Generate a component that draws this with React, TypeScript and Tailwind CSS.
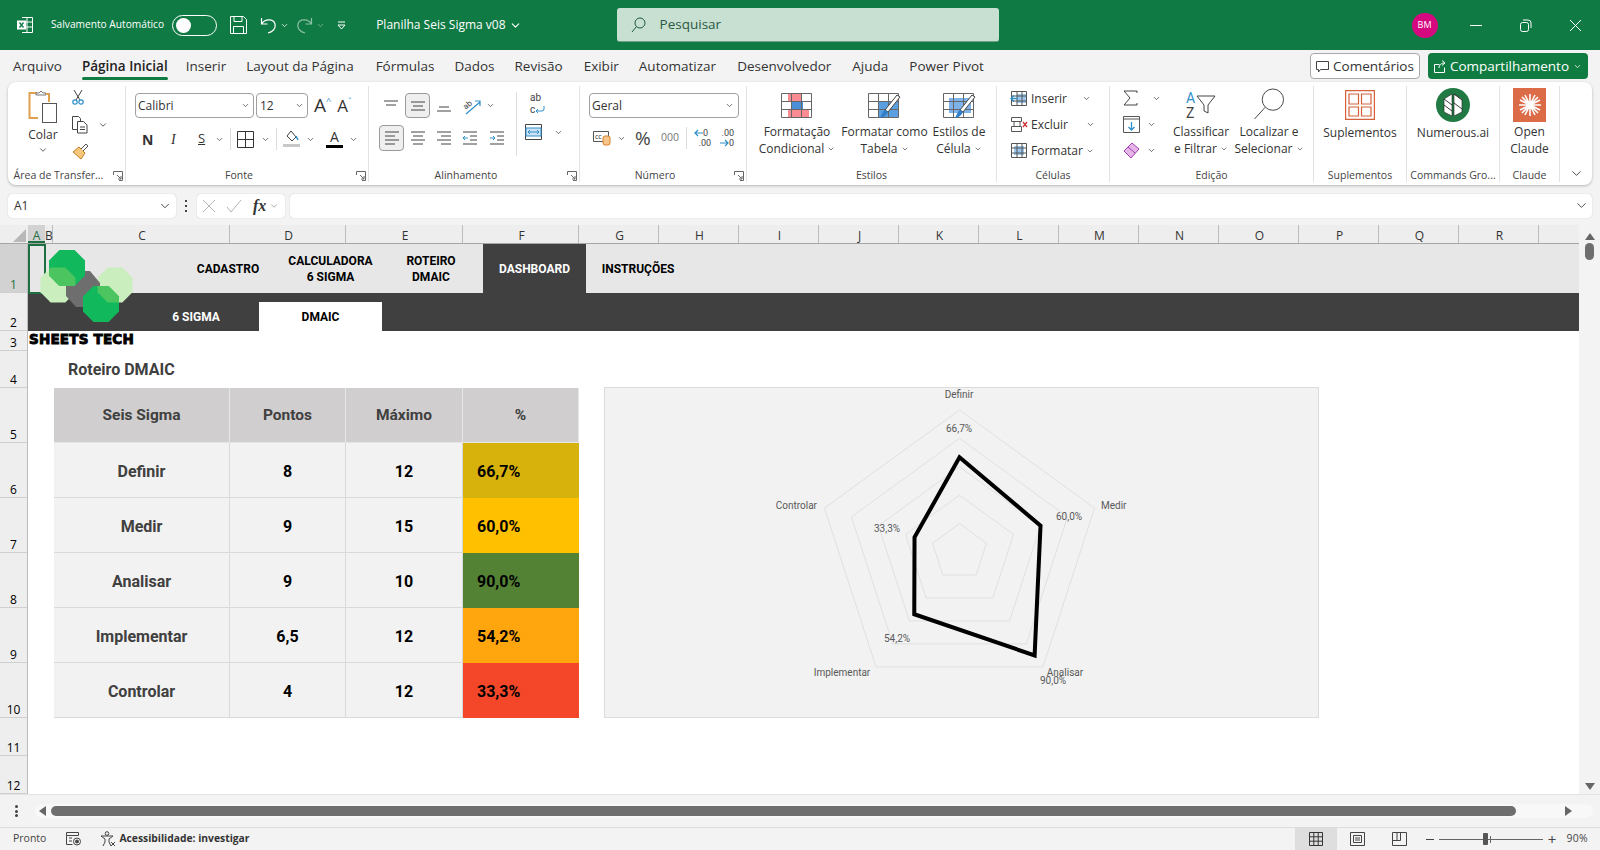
import { ChevronDown } from 'lucide-react'
import type { ReactNode } from 'react'

const ui = "font-['Open_Sans',sans-serif]"
const cal = "font-['Roboto',sans-serif]"

function Chev({ className = '', size = 10, tone = 'text-[#444]' }: { className?: string; size?: number; tone?: string }) {
  return <ChevronDown size={size} strokeWidth={2} className={`shrink-0 ${tone} ${className}`} />
}

function Launcher() {
  return (
    <svg width="10" height="10" viewBox="0 0 10 10" fill="none" stroke="#666" className="absolute top-[2px] right-[2px]">
      <path d="M.5 4V.5h9v9H6M4 4l4 4M8 5v3H5" />
    </svg>
  )
}

/* ribbon group: fixed width column with its caption underneath */
function Group({ w, label, launcher, children, last }: { w: string; label: string; launcher?: boolean; children: ReactNode; last?: boolean }) {
  return (
    <div className={`${w} relative flex shrink-0 flex-col`}>
      <div className={`h-[83px] ${last ? '' : 'border-r border-[#e3e3e3]'}`}>{children}</div>
      <div className={`relative h-[13px] text-center text-[10.5px] leading-[13px] text-[#444] ${launcher ? 'pr-[16px]' : ''} ${last ? '' : 'border-r border-[#e3e3e3]'}`}>
        {label}
        {launcher && <Launcher />}
      </div>
    </div>
  )
}

function Lines({ variant }: { variant: 'top' | 'mid' | 'bot' | 'left' | 'center' | 'right' }) {
  const p = {
    top: 'M1 3h14M3 7h10',
    mid: 'M1 4h14M3 8h10M1 12h14',
    bot: 'M3 9h10M1 13h14',
    left: 'M1 2h14M1 6h10M1 10h14M1 14h10',
    center: 'M1 2h14M3 6h10M1 10h14M3 14h10',
    right: 'M1 2h14M5 6h10M1 10h14M5 14h10',
  }[variant]
  return (
    <svg width="16" height="16" viewBox="0 0 16 16" fill="none" stroke="#444" strokeWidth="1.2">
      <path d={p} />
    </svg>
  )
}

function PasteIcon() {
  return (
    <svg width="30" height="34" viewBox="0 0 30 34" fill="none">
      <path d="M9 3H1.5v25H10" stroke="#e0a050" strokeWidth="2" />
      <path d="M8 5V3h3l2-2 2 2h3v2z" fill="#fff" stroke="#777" />
      <path d="M18 4h3v8" stroke="#e0a050" strokeWidth="2" />
      <rect x="14.5" y="13.5" width="14" height="19" fill="#fff" stroke="#555" />
    </svg>
  )
}

function Scissors() {
  return (
    <svg width="12" height="16" viewBox="0 0 12 16" fill="none">
      <path d="M2 1l6 10M10 1L4 11" stroke="#444" />
      <circle cx="3" cy="13" r="2.2" stroke="#2f8fc9" strokeWidth="1.2" />
      <circle cx="9" cy="13" r="2.2" stroke="#2f8fc9" strokeWidth="1.2" />
    </svg>
  )
}

function CopyIcon() {
  return (
    <svg width="16" height="18" viewBox="0 0 16 18" fill="none" stroke="#444">
      <path d="M5 13.5H.5V.5h6l2 2v3" />
      <path d="M5.5 5.5h6l3.5 3.5v8H5.5zM8 11h5M8 13.5h5" />
    </svg>
  )
}

function BrushIcon() {
  return (
    <svg width="17" height="17" viewBox="0 0 17 17" fill="none">
      <path d="M1 9l6-5 6 6-4 6z" fill="#f4c77b" stroke="#c77b20" />
      <path d="M9 6l5-5 2 2-5 5" fill="#fff" stroke="#555" />
    </svg>
  )
}

function FmtGrid({ kind }: { kind: 'cf' | 'table' | 'cell' }) {
  const grid = 'M.5 .5h30v24H.5zM.5 8.500h30M.5 16.500h30M10.500 .5v24M20.500 .5v24'
  return (
    <svg width="33" height="26" viewBox="0 0 33 26" fill="none">
      {kind === 'cf' && (
        <>
          <path d="M7 1h14v7H7zM7 17h21v7H7z" fill="#f98c92" />
          <path d="M10 9h12v7H10z" fill="#4a90d9" />
        </>
      )}
      {kind === 'table' && <path d="M11 8h19v16H11z" fill="#5a9fe0" />}
      {kind === 'cell' && <path d="M6 5h22v15H6z" fill="#7db3ea" />}
      <path d={grid} stroke="#666" />
      {kind !== 'cf' && <path d="M32 4L20 19l-3-2L29 2z" fill="#fff" stroke="#444" />}
      {kind !== 'cf' && <path d="M11 25c3-1 3-7 6-8l3 2c-1 3-5 6-9 6z" fill="#2f7fc9" />}
    </svg>
  )
}

function CellIcon({ kind }: { kind: 'ins' | 'del' | 'fmt' }) {
  return (
    <svg width="18" height="17" viewBox="0 0 18 17" fill="none">
      {kind === 'ins' && <path d="M7 4h10v9H7z" fill="#9cc7ee" />}
      {kind === 'fmt' && <path d="M4 4h10v9H4z" fill="#9cc7ee" />}
      <path d={kind === 'del' ? 'M1.500 1.500h10v4h-10zM4 5.500h6v5H4zM1.500 10.500h10v5h-10z' : 'M1.500 1.500h15v14h-15zM1.500 6h15M1.500 11h15M7 1.500v14M12 1.500v14'} stroke="#555" />
      {kind === 'ins' && <path d="M8 8.500H1M4 5.500l-3 3 3 3" stroke="#2f8fc9" strokeWidth="1.3" />}
      {kind === 'del' && <path d="M13 6l4 5M17 6l-4 5" stroke="#d13438" strokeWidth="1.3" />}
    </svg>
  )
}

function DecArrow({ dir }: { dir: 'left' | 'right' }) {
  return (
    <svg width="9" height="8" viewBox="0 0 9 8" fill="none" stroke="#2f8fc9" strokeWidth="1.2" className="shrink-0">
      <path d={dir === 'left' ? 'M9 4H1M4 1L1 4l3 3' : 'M0 4h8M5 1l3 3-3 3'} />
    </svg>
  )
}

function BigLabel({ lines, chev, width }: { lines: string[]; chev?: boolean; width?: string }) {
  return (
    <div className={`${width ?? ''} text-center text-[12px] leading-[17px] whitespace-nowrap text-[#333]`}>
      {lines.map((l, i) => (
        <div key={l} className="flex items-center justify-center gap-[3px]">
          {l}
          {chev && i === lines.length - 1 && <Chev size={8} />}
        </div>
      ))}
    </div>
  )
}

function TitleBar() {
  return (
    <div className="flex h-[50px] shrink-0 items-center bg-[#107a44] text-white">
      <svg width="18" height="18" viewBox="0 0 18 18" fill="none" className="ml-[16px]">
        <path d="M6 1.500h10.500v15H6M6 6h10.500M6 11h10.500M11 1.500v15" stroke="#fff" />
        <rect x="1" y="4.500" width="9" height="9" fill="#fff" />
        <path d="M3.500 6.500l4 5M7.500 6.500l-4 5" stroke="#107a44" strokeWidth="1.3" />
      </svg>
      <span className="ml-[17px] text-[10.2px] whitespace-nowrap">Salvamento Automático</span>
      <div className="ml-[8px] flex h-[21px] w-[45px] items-center rounded-full border border-white pl-[3px]">
        <div className="h-[15px] w-[15px] rounded-full bg-white" />
      </div>
      <svg width="17" height="18" viewBox="0 0 17 18" fill="none" stroke="#fff" className="ml-[13px]">
        <path d="M.5.5h13l3 3v14H.5zM4 .5v5h8v-5M3.500 17.500v-7h10v7" />
      </svg>
      <svg width="17" height="17" viewBox="0 0 17 17" fill="none" stroke="#fff" strokeWidth="1.2" className="ml-[13px]">
        <path d="M1.500 1v6h6M1.500 7c3-5 12-6 13.500 0 1 5-3 8-7 9" />
      </svg>
      <Chev size={9} className="ml-[3px]" tone="text-white" />
      <svg width="17" height="17" viewBox="0 0 17 17" fill="none" stroke="#8cbfa5" strokeWidth="1.2" className="ml-[7px]">
        <path d="M15.500 1v6h-6M15.500 7c-3-5-12-6-13.500 0-1 5 3 8 7 9" />
      </svg>
      <Chev size={9} className="ml-[3px]" tone="text-[#8cbfa5]" />
      <svg width="9" height="9" viewBox="0 0 9 9" className="ml-[12px]" fill="none" stroke="#fff">
        <path d="M1 1h7M1 4h7L4.500 8z" />
      </svg>
      <span className="ml-[30px] text-[12px] whitespace-nowrap">Planilha Seis Sigma v08</span>
      <Chev size={13} className="ml-[3px]" tone="text-white" />
      <div className="ml-[95px] flex h-[34px] w-[382px] items-center rounded-[3px] border-b border-[#6f9f86] bg-[#c8e0d2] pl-[14px] text-[#2a5a42]">
        <svg width="15" height="16" viewBox="0 0 15 16" fill="none" stroke="#1f5a3c">
          <circle cx="9" cy="6" r="5" />
          <path d="M5.500 9.500L1 15" />
        </svg>
        <span className="ml-[14px] text-[13.5px]">Pesquisar</span>
      </div>
      <div className="ml-[413px] flex h-[25px] w-[26px] items-center justify-center rounded-full bg-[#d6087f] text-[9px]">BM</div>
      <div className="ml-[32px] h-px w-[12px] bg-white" />
      <svg width="13" height="13" viewBox="0 0 13 13" fill="none" stroke="#fff" className="ml-[37px]">
        <rect x="1.500" y="3.500" width="8" height="9" rx="2" />
        <path d="M4 1h5a3 3 0 013 3v5" />
      </svg>
      <svg width="13" height="13" viewBox="0 0 13 13" fill="none" stroke="#fff" className="ml-[37px]">
        <path d="M1 1l11 11M12 1L1 12" />
      </svg>
    </div>
  )
}

function Tabs() {
  const tabs: [string, string][] = [
    ['Inserir', 'ml-[18px]'],
    ['Layout da Página', 'ml-[20px]'],
    ['Fórmulas', 'ml-[22px]'],
    ['Dados', 'ml-[20px]'],
    ['Revisão', 'ml-[20px]'],
    ['Exibir', 'ml-[21px]'],
    ['Automatizar', 'ml-[20px]'],
    ['Desenvolvedor', 'ml-[21px]'],
    ['Ajuda', 'ml-[21px]'],
    ['Power Pivot', 'ml-[21px]'],
  ]
  return (
    <div className="flex h-[32px] shrink-0 items-center bg-[#f3f3f3] text-[13.5px] whitespace-nowrap text-[#333]">
      <span className="ml-[13px]">Arquivo</span>
      <span className="relative ml-[20px] font-semibold text-[#222]">
        Página Inicial
        <span className="absolute -bottom-[4px] left-0 h-[3px] w-full rounded-sm bg-[#107c41]" />
      </span>
      {tabs.map(([t, c]) => (
        <span key={t} className={c}>
          {t}
        </span>
      ))}
      <div className="ml-auto flex h-[26px] w-[110px] items-center justify-center gap-[4px] rounded-[4px] border border-[#a8a8a8] bg-white">
        <svg width="13" height="13" viewBox="0 0 13 13" fill="none" stroke="#444">
          <path d="M.5 1.500h12v8h-8l-2 2.500v-2.500h-2z" />
        </svg>
        Comentários
      </div>
      <div className="mr-[12px] ml-[8px] flex h-[26px] w-[160px] items-center justify-center gap-[4px] rounded-[4px] bg-[#107c41] text-white">
        <svg width="12" height="13" viewBox="0 0 12 13" fill="none" stroke="#fff">
          <path d="M.5 4.500h5M.5 4.500v8h10v-5M5 8c0-3 2-5 6-5M8 .5l3 2.500-3 2.500" />
        </svg>
        Compartilhamento
        <Chev size={9} tone="text-white" />
      </div>
    </div>
  )
}

function Ribbon() {
  return (
    <div className="mx-[8px] flex h-[103px] shrink-0 rounded-[8px] bg-white pt-[4px] shadow-[0_1px_3px_rgba(0,0,0,0.25)]">
      <Group w="w-[118px]" label="Área de Transfer..." launcher>
        <div className="flex">
          <div className="ml-[20px] flex w-[30px] flex-col items-center pt-[4px]">
            <PasteIcon />
            <span className="mt-[3px] text-[12px] leading-[16px] text-[#333]">Colar</span>
            <Chev size={10} className="mt-[2px]" />
          </div>
          <div className="ml-[14px] flex flex-col items-start pt-[3px]">
            <Scissors />
            <div className="mt-[11px] flex items-center gap-[10px]">
              <CopyIcon />
              <Chev size={10} />
            </div>
            <div className="mt-[9px]">
              <BrushIcon />
            </div>
          </div>
        </div>
      </Group>

      <Group w="w-[243px]" label="Fonte" launcher>
        <div className="ml-[9px] flex items-center pt-[7px]">
          <div className="flex h-[25px] w-[119px] items-center justify-between rounded-[4px] border border-[#a0a0a0] pr-[3px] pl-[2px] text-[12px] text-[#333]">
            Calibri
            <Chev size={9} />
          </div>
          <div className="ml-[2px] flex h-[25px] w-[52px] items-center justify-between rounded-[4px] border border-[#a0a0a0] pr-[3px] pl-[3px] text-[12px] text-[#333]">
            12
            <Chev size={9} />
          </div>
          <span className="ml-[6px] flex items-start text-[19px] leading-none text-[#333]">
            A<span className="text-[9px] leading-[9px] text-[#2f8fc9]">^</span>
          </span>
          <span className="ml-[6px] flex items-start text-[17px] leading-none text-[#333]">
            A<span className="text-[9px] leading-[9px] text-[#2f8fc9]">ˇ</span>
          </span>
        </div>
        <div className="mt-[9px] ml-[16px] flex h-[24px] items-center text-[#333]">
          <span className="w-[29px] text-[14px] font-bold text-[#333]">N</span>
          <span className="w-[27px] font-['Liberation_Serif',serif] text-[14px] italic">I</span>
          <span className="w-[14px] text-[13px] underline">S</span>
          <Chev size={9} className="ml-[3px]" />
          <div className="mx-[6px] h-[22px] w-px bg-[#ddd]" />
          <svg width="17" height="17" viewBox="0 0 17 17" fill="none" stroke="#333">
            <path d="M.5.5h16v16H.5zM8.500.5v16M.5 8.500h16" />
          </svg>
          <Chev size={9} className="ml-[7px]" />
          <div className="mx-[6px] h-[22px] w-px bg-[#ddd]" />
          <svg width="17" height="18" viewBox="0 0 17 18" fill="none">
            <path d="M8 1l5 6-4 4-5-5z" stroke="#444" />
            <path d="M13 6l2 4" stroke="#2f8fc9" strokeWidth="1.5" />
            <path d="M0 14h17v3H0z" fill="#c8c8c8" />
          </svg>
          <Chev size={9} className="ml-[6px]" />
          <div className="ml-[11px] flex w-[17px] flex-col items-center">
            <span className="text-[14px] leading-[14px]">A</span>
            <span className="mt-[1px] h-[3px] w-[17px] bg-black" />
          </div>
          <Chev size={9} className="ml-[6px]" />
        </div>
      </Group>

      <Group w="w-[211px]" label="Alinhamento" launcher>
        <div className="flex">
          <div>
            <div className="flex items-center pt-[7px]">
              <div className="ml-[14px]">
                <Lines variant="top" />
              </div>
              <div className="ml-[6px] flex h-[25px] w-[25px] items-center justify-center rounded-[4px] border border-[#9a9a9a] bg-[#efefef]">
                <Lines variant="mid" />
              </div>
              <div className="ml-[6px]">
                <Lines variant="bot" />
              </div>
              <svg width="22" height="20" viewBox="0 0 22 20" fill="none" className="ml-[8px]">
                <text x="3" y="12" fontSize="8" fill="#444" transform="rotate(-40 7 9)" fontFamily="Roboto">ab</text>
                <path d="M6 18L20 6M15 5h5v5" stroke="#2f8fc9" strokeWidth="1.2" />
              </svg>
              <Chev size={9} className="ml-[4px]" />
            </div>
            <div className="mt-[7px] flex items-center">
              <div className="ml-[10px] flex h-[26px] w-[25px] items-center justify-center rounded-[4px] border border-[#9a9a9a] bg-[#efefef]">
                <Lines variant="left" />
              </div>
              <div className="ml-[6px]">
                <Lines variant="center" />
              </div>
              <div className="ml-[10px]">
                <Lines variant="right" />
              </div>
              <svg width="16" height="16" viewBox="0 0 16 16" fill="none" stroke="#444" className="ml-[10px]">
                <path d="M1 2h14M8 6h7M8 10h7M1 14h14" strokeWidth="1.2" />
                <path d="M6 8H1M3 6L1 8l2 2" stroke="#2f8fc9" />
              </svg>
              <svg width="16" height="16" viewBox="0 0 16 16" fill="none" stroke="#444" className="ml-[11px]">
                <path d="M1 2h14M8 6h7M8 10h7M1 14h14" strokeWidth="1.2" />
                <path d="M1 8h5M4 6l2 2-2 2" stroke="#2f8fc9" />
              </svg>
            </div>
          </div>
          <div className="mt-[6px] ml-[11px] h-[64px] w-px bg-[#ddd]" />
          <div className="ml-[8px] flex flex-col">
            <div className={`${cal} mt-[6px] ml-[5px] text-[10px] leading-[11.700px] text-[#444]`}>
              ab
              <div className="flex items-center">
                c
                <svg width="10" height="8" viewBox="0 0 10 8" fill="none" stroke="#2f8fc9">
                  <path d="M9 0v3a2 2 0 01-2 2H1M3 3L1 5l2 2" />
                </svg>
              </div>
            </div>
            <div className="mt-[9px] flex items-center">
              <svg width="17" height="16" viewBox="0 0 17 16" fill="none">
                <path d="M.5.5h16v15H.5z" stroke="#444" />
                <path d="M1 4h15v8H1z" fill="#cfe4f5" stroke="#2f8fc9" />
                <path d="M3 8h11M5 6L3 8l2 2M12 6l2 2-2 2" stroke="#2f8fc9" />
              </svg>
              <Chev size={9} className="ml-[12px]" />
            </div>
          </div>
        </div>
      </Group>

      <Group w="w-[167px]" label="Número" launcher>
        <div className="mt-[7px] ml-[9px] flex h-[25px] w-[150px] items-center justify-between rounded-[4px] border border-[#a0a0a0] pr-[4px] pl-[2px] text-[12px] text-[#333]">
          Geral
          <Chev size={9} />
        </div>
        <div className="mt-[7px] ml-[13px] flex h-[26px] items-center text-[#444]">
          <svg width="18" height="16" viewBox="0 0 18 16" fill="none">
            <path d="M.5 1.500h15v10H.5z" stroke="#555" />
            <text x="2" y="9" fontSize="7" fill="#333" fontFamily="Open Sans">cc</text>
            <rect x="10" y="6" width="7" height="9" rx="2" fill="#f6c58a" stroke="#d9822b" />
          </svg>
          <Chev size={9} className="ml-[6px]" />
          <span className="ml-[9px] w-[17px] text-[19px] leading-none">%</span>
          <span className="ml-[9px] text-[10.500px] text-[#777]">000</span>
          <div className="mx-[7px] h-[22px] w-px bg-[#ddd]" />
          <div className={`${cal} w-[17px] text-[9px] leading-[10.500px] text-[#444]`}>
            <div className="flex items-center">
              <DecArrow dir="left" />0
            </div>
            <div className="text-right">.00</div>
          </div>
          <div className={`${cal} ml-[9px] text-[9px] leading-[10.500px] text-[#444]`}>
            <div className="text-right">.00</div>
            <div className="flex items-center">
              <DecArrow dir="right" />0
            </div>
          </div>
        </div>
      </Group>

      <Group w="w-[250px]" label="Estilos">
        <div className="flex pt-[7px]">
          <div className="ml-[6px] flex w-[88px] flex-col items-center gap-[4px]">
            <FmtGrid kind="cf" />
            <BigLabel lines={['Formatação', 'Condicional']} chev />
          </div>
          <div className="flex w-[87px] flex-col items-center gap-[4px]">
            <FmtGrid kind="table" />
            <BigLabel lines={['Formatar como', 'Tabela']} chev />
          </div>
          <div className="flex w-[62px] flex-col items-center gap-[4px]">
            <FmtGrid kind="cell" />
            <BigLabel lines={['Estilos de', 'Célula']} chev />
          </div>
        </div>
      </Group>

      <Group w="w-[113px]" label="Células">
        <div className="ml-[13px] flex flex-col gap-[9px] pt-[4px] text-[12px] leading-[17px] text-[#333]">
          <div className="flex items-center gap-[3px]">
            <CellIcon kind="ins" />
            Inserir
            <Chev size={9} className="ml-[12px]" />
          </div>
          <div className="flex items-center gap-[3px]">
            <CellIcon kind="del" />
            Excluir
            <Chev size={9} className="ml-[15px]" />
          </div>
          <div className="flex items-center gap-[3px]">
            <CellIcon kind="fmt" />
            Formatar
            <Chev size={8} />
          </div>
        </div>
      </Group>

      <Group w="w-[204px]" label="Edição">
        <div className="flex">
          <div className="ml-[13px] flex flex-col gap-[8px] pt-[3px]">
            <div className="flex h-[18px] items-center">
              <svg width="15" height="16" viewBox="0 0 15 16" fill="none" stroke="#444">
                <path d="M14 3V1H1l6 7-6 7h13v-2" />
              </svg>
              <Chev size={9} className="ml-[14px]" />
            </div>
            <div className="flex h-[18px] items-center">
              <svg width="17" height="17" viewBox="0 0 17 17" fill="none">
                <path d="M.5.5h16v16H.5z" stroke="#555" />
                <path d="M.5 3h16" stroke="#555" />
                <path d="M8.500 6v8M5.500 11l3 3 3-3" stroke="#2f8fc9" strokeWidth="1.3" />
              </svg>
              <Chev size={9} className="ml-[7px]" />
            </div>
            <div className="flex h-[18px] items-center">
              <svg width="17" height="17" viewBox="0 0 17 17" fill="none">
                <path d="M1 9l8-8 7 6-8 9z" fill="#e6b5e8" stroke="#a03fb0" />
                <path d="M5 5l7 6" stroke="#a03fb0" />
              </svg>
              <Chev size={9} className="ml-[7px]" />
            </div>
          </div>
          <div className="ml-[6px] flex w-[68px] flex-col items-center gap-[3px] pt-[2px]">
            <svg width="32" height="32" viewBox="0 0 32 32" fill="none">
              <text x="1" y="15" fontSize="14" fill="#2f8fc9" fontFamily="Roboto">A</text>
              <text x="1" y="30" fontSize="14" fill="#444" fontFamily="Roboto">Z</text>
              <path d="M12 8h18l-7 9v8l-4-2v-6z" stroke="#444" />
            </svg>
            <BigLabel lines={['Classificar', 'e Filtrar']} chev />
          </div>
          <div className="flex w-[68px] flex-col items-center gap-[3px] pt-[2px]">
            <svg width="32" height="32" viewBox="0 0 32 33" fill="none" stroke="#444">
              <circle cx="20" cy="12" r="11" />
              <path d="M12 20L1 32" />
            </svg>
            <BigLabel lines={['Localizar e', 'Selecionar']} chev />
          </div>
        </div>
      </Group>

      <Group w="w-[93px]" label="Suplementos">
        <div className="flex flex-col items-center gap-[4px] pt-[4px]">
          <svg width="30" height="30" viewBox="0 0 30 30" fill="none" stroke="#d4603c" strokeWidth="1.2">
            <path d="M.6.6h28.800v28.800H.6zM4 4h9.500v10H4zM16.500 4H26v10h-9.500zM4 17h9.500v9H4zM16.500 17H26v9h-9.500z" />
          </svg>
          <BigLabel lines={['Suplementos']} />
        </div>
      </Group>

      <Group w="w-[93px]" label="Commands Gro...">
        <div className="flex flex-col items-center gap-[2px] pt-[2px]">
          <svg width="34" height="34" viewBox="0 0 34 34">
            <circle cx="17" cy="17" r="17" fill="#217a43" />
            <path d="M8 11l8-5v22l-8-4zM18 6l8 5v13l-8 4z" fill="#fff" />
            <path d="M8 11l8 6M8 17l8 6M18 6l8 6M18 15l8 6" stroke="#222" strokeWidth=".9" fill="none" />
            <path d="M8 11l8-5v22l-8-4zM18 6l8 5v13l-8 4z" stroke="#222" strokeWidth=".6" fill="none" />
          </svg>
          <BigLabel lines={['Numerous.ai']} />
        </div>
      </Group>

      <Group w="w-[60px]" label="Claude">
        <div className="flex flex-col items-center gap-[1px] pt-[2px]">
          <div className="flex h-[34px] w-[33px] items-center justify-center bg-[#dc6b48]">
            <svg width="24" height="24" viewBox="0 0 24 24" stroke="#fff" strokeWidth="1.6">
              <path d="M12 1v22M1 12h22M4 4l16 16M20 4L4 20M7 2l10 20M17 2L7 22M2 7l20 10M22 7L2 17" />
            </svg>
          </div>
          <BigLabel lines={['Open', 'Claude']} />
        </div>
      </Group>

      <div className="flex flex-1 flex-col items-center justify-end pb-[4px]">
        <ChevronDown size={15} strokeWidth={1.5} className="text-[#444]" />
      </div>
    </div>
  )
}

function FormulaBar() {
  return (
    <div className="flex h-[25px] shrink-0 items-center px-[8px]">
      <div className="flex h-[24px] w-[168px] items-center justify-between rounded-[4px] bg-white pr-[4px] pl-[6px] text-[12px] text-[#333] shadow-[0_0_1px_rgba(0,0,0,0.3)]">
        A1
        <ChevronDown size={14} strokeWidth={1.5} />
      </div>
      <div className="ml-[9px] flex h-[12px] w-[3px] flex-col justify-between">
        <span className="h-[2px] w-[2px] bg-[#444]" />
        <span className="h-[2px] w-[2px] bg-[#444]" />
        <span className="h-[2px] w-[2px] bg-[#444]" />
      </div>
      <div className="ml-[9px] flex h-[24px] w-[88px] items-center rounded-[4px] bg-white pl-[5px] shadow-[0_0_1px_rgba(0,0,0,0.3)]">
        <svg width="14" height="14" viewBox="0 0 14 14" stroke="#b5b5b5" fill="none">
          <path d="M1 1l12 12M13 1L1 13" />
        </svg>
        <svg width="16" height="14" viewBox="0 0 16 14" stroke="#b5b5b5" fill="none" className="ml-[10px]">
          <path d="M1 8l4 5L15 1" />
        </svg>
        <span className="ml-[11px] font-['Liberation_Serif',serif] text-[16px] font-semibold text-[#333] italic">fx</span>
        <ChevronDown size={10} strokeWidth={1.5} className="ml-[3px] text-[#777]" />
      </div>
      <div className="ml-[5px] flex h-[24px] flex-1 items-center justify-end rounded-[4px] bg-white pr-[3px] shadow-[0_0_1px_rgba(0,0,0,0.3)]">
        <ChevronDown size={15} strokeWidth={1.5} className="text-[#444]" />
      </div>
    </div>
  )
}

function ColumnHeader() {
  const cols: [string, string][] = [
    ['C', 'w-[177px]'],
    ['D', 'w-[116px]'],
    ['E', 'w-[117px]'],
    ['F', 'w-[116px]'],
    ['G', 'w-[80px]'],
    ['H', 'w-[80px]'],
    ['I', 'w-[80px]'],
    ['J', 'w-[80px]'],
    ['K', 'w-[80px]'],
    ['L', 'w-[80px]'],
    ['M', 'w-[80px]'],
    ['N', 'w-[80px]'],
    ['O', 'w-[80px]'],
    ['P', 'w-[80px]'],
    ['Q', 'w-[80px]'],
    ['R', 'w-[80px]'],
  ]
  return (
    <div className="flex h-[19px] items-stretch border-b border-[#a6a6a6] bg-[#eeeeee] text-[12px] leading-[21px] text-[#333]">
      <div className="flex w-[28px] items-end justify-end">
        <div className="mr-[2px] mb-[1px] h-0 w-0 border-b-[13px] border-l-[13px] border-b-[#b8b8b8] border-l-transparent" />
      </div>
      <div className="w-[17px] border-b-2 border-[#1d6f42] bg-[#d2d2d2] text-center text-[#1d6f42]">A</div>
      <div className="w-[8px] border-r border-[#bdbdbd] text-center">B</div>
      {cols.map(([c, w]) => (
        <div key={c} className={`${w} border-r border-[#bdbdbd] pl-[2px] text-center`}>
          {c}
        </div>
      ))}
      <div className="flex-1" />
    </div>
  )
}

const rowHeaders: [string, string][] = [
  ['1', 'h-[49px] bg-[#d2d2d2] text-[#1d6f42]'],
  ['2', 'h-[38px]'],
  ['3', 'h-[20px]'],
  ['4', 'h-[37px]'],
  ['5', 'h-[55px]'],
  ['6', 'h-[55px]'],
  ['7', 'h-[55px]'],
  ['8', 'h-[55px]'],
  ['9', 'h-[55px]'],
  ['10', 'h-[55px]'],
  ['11', 'h-[38px]'],
  ['12', 'h-[38px]'],
]

function NavCell({ className, children }: { className: string; children: ReactNode }) {
  return <div className={`${className} flex shrink-0 items-center justify-center text-center leading-[16px]`}>{children}</div>
}

const scoreRows = [
  { name: 'Definir', pts: '8', max: '12', pct: '66,7%', color: 'bg-[#d8b20c]' },
  { name: 'Medir', pts: '9', max: '15', pct: '60,0%', color: 'bg-[#ffc000]' },
  { name: 'Analisar', pts: '9', max: '10', pct: '90,0%', color: 'bg-[#548235]' },
  { name: 'Implementar', pts: '6,5', max: '12', pct: '54,2%', color: 'bg-[#ffa50d]' },
  { name: 'Controlar', pts: '4', max: '12', pct: '33,3%', color: 'bg-[#f4472a]' },
]

function ScoreTable() {
  const head = 'flex items-center justify-center border-r border-b border-[#e6e6e6] bg-[#d0cece] pt-[2px] text-[15.5px] text-[#404040]'
  const cell = 'flex items-center justify-center border-r border-b border-[#d9d9d9] bg-[#f2f2f2] pt-[3px] text-[#404040]'
  return (
    <div className={`${cal} ml-[26px] grid w-[525px] shrink-0 grid-cols-[176px_116px_117px_116px] grid-rows-[repeat(6,55px)] text-[16px] font-bold`}>
      <div className={head}>Seis Sigma</div>
      <div className={head}>Pontos</div>
      <div className={head}>Máximo</div>
      <div className={head}>%</div>
      {scoreRows.map((r) => (
        <div key={r.name} className="contents">
          <div className={cell}>{r.name}</div>
          <div className={`${cell} !text-black`}>{r.pts}</div>
          <div className={`${cell} !text-black`}>{r.max}</div>
          <div className={`${r.color} flex items-center pt-[3px] pl-[14px] text-black`}>{r.pct}</div>
        </div>
      ))}
    </div>
  )
}

function vertex(r: number, i: number) {
  const a = (i * 72 * Math.PI) / 180
  return [958.5 + r * Math.sin(a), 551 - r * Math.cos(a)]
}

function ring(r: number) {
  return [0, 1, 2, 3, 4].map((i) => vertex(r, i).join(',')).join(' ')
}

const chartLabels: [string, number, number, 'start' | 'middle' | 'end'][] = [
  ['Definir', 958, 397, 'middle'],
  ['66,7%', 958, 431, 'middle'],
  ['Controlar', 816, 508, 'end'],
  ['Medir', 1100, 508, 'start'],
  ['60,0%', 1068, 519, 'middle'],
  ['33,3%', 886, 531, 'middle'],
  ['54,2%', 896, 641, 'middle'],
  ['Implementar', 841, 675, 'middle'],
  ['Analisar', 1064, 675, 'middle'],
  ['90,0%', 1052, 683, 'middle'],
]

function RadarChart() {
  const data = [0.667, 0.6, 0.9, 0.542, 0.333]
  const points = data.map((v, i) => vertex(v * 142, i).join(',')).join(' ')
  return (
    <div className="ml-[25px] h-[331px] w-[715px] shrink-0 -translate-y-px border border-[#dcdcdc] bg-[#f2f2f2]">
      <svg width="713" height="329" viewBox="604 387 713 329" className={cal}>
        {[142, 113.6, 85.2, 56.8, 28.4].map((r) => (
          <polygon key={r} points={ring(r)} fill="none" stroke="#e0e0e0" strokeWidth="1" />
        ))}
        <polygon points={points} fill="none" stroke="#000" strokeWidth="4" strokeLinejoin="miter" />
        {chartLabels.map(([t, x, y, a]) => (
          <text key={t} x={x} y={y} textAnchor={a} fontSize="10" fill="#595959">
            {t}
          </text>
        ))}
      </svg>
    </div>
  )
}

function Logo() {
  const octagon = (cx: number, cy: number, r: number) => {
    const k = r * 0.42
    return `${cx - k},${cy - r} ${cx + k},${cy - r} ${cx + r},${cy - k} ${cx + r},${cy + k} ${cx + k},${cy + r} ${cx - k},${cy + r} ${cx - r},${cy + k} ${cx - r},${cy - k}`
  }
  return (
    <svg width="110" height="82" viewBox="30 245 110 82" className="absolute top-[1px] left-[30px]">
      <defs>
        <clipPath id="logoTop">
          <polygon points={octagon(67, 268, 18)} />
        </clipPath>
        <clipPath id="logoBottom">
          <polygon points={octagon(101, 304, 18)} />
        </clipPath>
      </defs>
      <polygon points={octagon(58, 285, 17.5)} fill="#cbeebf" />
      <polygon points={octagon(115, 285, 17.5)} fill="#cbeebf" />
      <polygon points="76,271 90,271 100,283 100,293 88,307 76,307 66,296 66,286" fill="#6e6e6e" />
      <polygon points={octagon(67, 268, 18)} fill="#12b85c" />
      <polygon points={octagon(101, 304, 18)} fill="#12b85c" />
      <polygon points={octagon(58, 285, 17.5)} fill="#4cc45f" clipPath="url(#logoTop)" />
      <polygon points={octagon(115, 285, 17.5)} fill="#4cc45f" clipPath="url(#logoBottom)" />
    </svg>
  )
}

function Sheet() {
  return (
    <div className="relative flex min-h-0 flex-1">
      <div className="flex min-w-0 flex-1 flex-col">
        <ColumnHeader />
        <div className="relative flex flex-1 overflow-hidden bg-white">
          <div className="w-[28px] shrink-0 border-r border-[#bdbdbd] bg-[#eeeeee]">
            {rowHeaders.map(([n, c]) => (
              <div key={n} className={`${c} flex items-end justify-center border-b border-[#cfcfcf] text-[12px] leading-[14px]`}>
                {n}
              </div>
            ))}
          </div>
          <div className="flex min-w-0 flex-1 flex-col">
            <div className={`${cal} flex h-[49px] bg-[#e7e7e7] text-[12px] font-bold text-black`}>
              <NavCell className="ml-[168px] w-[64px]">CADASTRO</NavCell>
              <NavCell className="ml-[22px] w-[97px]">
                CALCULADORA
                <br />6 SIGMA
              </NavCell>
              <NavCell className="ml-[15px] w-[74px]">
                ROTEIRO
                <br />
                DMAIC
              </NavCell>
              <NavCell className="ml-[15px] w-[103px] bg-[#404040] text-white">DASHBOARD</NavCell>
              <NavCell className="ml-[15px] w-[74px]">INSTRUÇÕES</NavCell>
            </div>
            <div className={`${cal} flex h-[38px] items-end bg-[#404040] text-[12px] font-bold`}>
              <NavCell className="ml-[142px] h-[29px] w-[52px] text-white">6 SIGMA</NavCell>
              <NavCell className="ml-[37px] h-[29px] w-[123px] bg-white text-black">DMAIC</NavCell>
            </div>
            <div className="flex h-[20px] items-center pb-[3px] pl-[1px] font-['DejaVu_Sans',sans-serif] text-[13.5px] leading-none font-bold tracking-[0.2px] text-black [-webkit-text-stroke:0.9px_black]">
              SHEETS TECH
            </div>
            <div className={`${cal} flex h-[37px] items-center pl-[40px] text-[16px] font-bold text-[#404040]`}>Roteiro DMAIC</div>
            <div className="flex">
              <ScoreTable />
              <RadarChart />
            </div>
          </div>
          <div className="absolute top-0 left-[28px] h-[50px] w-[18px] border-2 border-[#1d6f42]" />
          <Logo />
        </div>
      </div>
      <div className="flex w-[21px] shrink-0 flex-col items-center bg-[#f3f3f3] pt-[8px] pb-[4px]">
        <div className="h-0 w-0 border-x-[5px] border-b-[7px] border-x-transparent border-b-[#666]" />
        <div className="mt-[3px] h-[17px] w-[9px] rounded-full bg-[#6e6e6e]" />
        <div className="mt-auto h-0 w-0 border-x-[5px] border-t-[7px] border-x-transparent border-t-[#666]" />
      </div>
    </div>
  )
}

function BottomBars() {
  return (
    <>
      <div className="flex h-[33px] shrink-0 items-center border-t border-[#e3e3e3] bg-[#f3f3f3]">
        <div className="ml-[15px] flex h-[12px] w-[3px] flex-col justify-between">
          <span className="h-[3px] w-[3px] rounded-full bg-[#444]" />
          <span className="h-[3px] w-[3px] rounded-full bg-[#444]" />
          <span className="h-[3px] w-[3px] rounded-full bg-[#444]" />
        </div>
        <div className="ml-[17px] flex h-[14px] w-[1558px] items-center rounded-full bg-[#f8f8f8] pl-[4px]">
          <div className="h-0 w-0 border-y-[5px] border-r-[7px] border-y-transparent border-r-[#666]" />
          <div className="ml-[5px] h-[10px] w-[1465px] rounded-full bg-[#6e6e6e]" />
          <div className="ml-[49px] h-0 w-0 border-y-[5px] border-l-[7px] border-y-transparent border-l-[#666]" />
        </div>
      </div>
      <div className={`${ui} flex h-[23px] shrink-0 items-stretch border-t border-[#dcdcdc] bg-[#f3f3f3] text-[10.5px] text-[#444]`}>
        <span className="ml-[13px] flex items-center">Pronto</span>
        <svg width="16" height="14" viewBox="0 0 16 14" fill="none" stroke="#444" className="mt-[4px] ml-[20px]">
          <path d="M.5.5h12v3H.5zM.5 3.500v9h6M3 6h3M3 9h3" />
          <circle cx="11" cy="9.500" r="3.500" />
          <circle cx="11" cy="9.500" r="1.500" fill="#444" />
        </svg>
        <svg width="16" height="16" viewBox="0 0 16 16" fill="none" stroke="#444" className="mt-[3px] ml-[18px]">
          <circle cx="7" cy="2.500" r="1.800" />
          <path d="M1 5h12L9 8v3l2 4M5 8v3l-2 4M5 8L1 5" />
          <path d="M11 11l4 4M15 11l-4 4" />
        </svg>
        <span className="ml-[3px] flex items-center text-[10.300px] font-bold text-[#333]">Acessibilidade: investigar</span>
        <div className="ml-auto flex w-[42px] items-center justify-center bg-[#dedede]">
          <svg width="14" height="14" viewBox="0 0 14 14" fill="none" stroke="#333">
            <path d="M.5.5h13v13H.5zM4.800.5v13M9.200.5v13M.5 4.800h13M.5 9.200h13" />
          </svg>
        </div>
        <svg width="15" height="14" viewBox="0 0 15 14" fill="none" stroke="#444" className="mt-[4px] ml-[13px]">
          <path d="M.5.5h14v13H.5zM3.500 3.500h8v7h-8zM5 6h5M5 8h5" />
        </svg>
        <svg width="15" height="14" viewBox="0 0 15 14" fill="none" stroke="#444" className="mt-[4px] ml-[27px]">
          <path d="M.5.5h14v13H.5zM.5 8.500h8v-8M5 .5v8" />
        </svg>
        <div className="ml-[19px] flex items-center">
          <span className="h-px w-[8px] bg-[#444]" />
          <div className="relative ml-[5px] h-px w-[104px] bg-[#666]">
            <span className="absolute top-[-6px] left-[44px] h-[12px] w-[5px] rounded-[1px] bg-[#555]" />
            <span className="absolute top-[-3px] left-[51px] h-[7px] w-px bg-[#666]" />
          </div>
          <span className="ml-[5px] text-[15px] leading-none">+</span>
        </div>
        <span className="mr-[12px] ml-[10px] flex items-center text-[10.5px] tracking-[0.3px]">90%</span>
      </div>
    </>
  )
}

export default function App() {
  return (
    <div className={`${ui} flex h-[850px] w-[1600px] flex-col overflow-hidden bg-[#f3f3f3]`}>
      <TitleBar />
      <Tabs />
      <Ribbon />
      <div className="h-[8px] shrink-0" />
      <FormulaBar />
      <div className="h-[7px] shrink-0" />
      <Sheet />
      <BottomBars />
    </div>
  )
}
